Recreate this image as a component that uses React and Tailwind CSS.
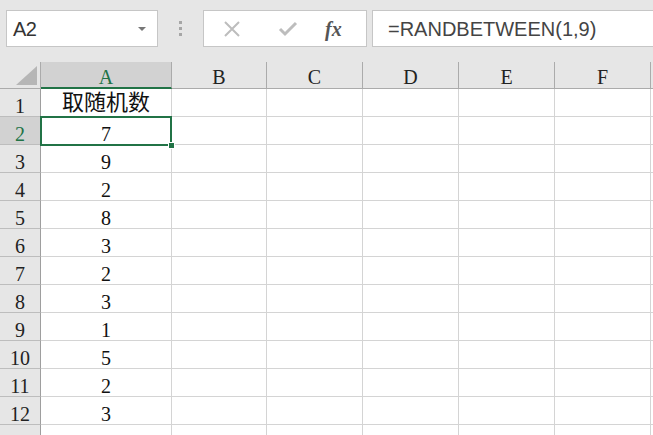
import React from "react";

const cols = [
  { l: "A", w: 131 },
  { l: "B", w: 95 },
  { l: "C", w: 96 },
  { l: "D", w: 96 },
  { l: "E", w: 96 },
  { l: "F", w: 96 },
  { l: "", w: 96 },
];
const data = ["取随机数", "7", "9", "2", "8", "3", "2", "3", "1", "5", "2", "3", ""];

const serif = { fontFamily: '"Liberation Serif", "Noto Sans CJK SC", serif' };

export default function App() {
  return (
    <div className="w-[653px] h-[435px] overflow-hidden bg-[#e6e6e6] relative">
      {/* formula bar */}
      <div className="h-[62px] flex items-start pt-[10px] pl-[6px]">
        <div className="w-[152px] h-[37px] bg-white border border-[#c6c6c6] flex items-center justify-between pl-[6px] pr-[10px]">
          <span className="text-[20px] text-[#333] font-['Liberation_Sans',sans-serif] tracking-[-0.5px]">A2</span>
          <svg width="10" height="6" viewBox="0 0 10 6"><path d="M1 1h8L5 5z" fill="#777" /></svg>
        </div>
        <div className="w-[45px] h-[37px] flex flex-col items-center justify-center gap-[3px]">
          <div className="w-[3px] h-[3px] bg-[#a6a6a6]" />
          <div className="w-[3px] h-[3px] bg-[#a6a6a6]" />
          <div className="w-[3px] h-[3px] bg-[#a6a6a6]" />
        </div>
        <div className="w-[164px] h-[37px] bg-white border border-[#c6c6c6] flex items-center">
          <svg className="ml-[19px]" width="18" height="18" viewBox="0 0 18 18"><path d="M2 2L16 16M16 2L2 16" stroke="#bdbdbd" strokeWidth="2" /></svg>
          <svg className="ml-[37px]" width="20" height="18" viewBox="0 0 20 18"><path d="M2 9L7 14L18 3" stroke="#bdbdbd" strokeWidth="3" fill="none" /></svg>
          <span className="ml-[27px] text-[20px] italic text-[#555] font-['Liberation_Serif',serif] font-semibold">fx</span>
        </div>
        <div className="flex-1 h-[37px] ml-[5px] bg-white border border-r-0 border-[#c6c6c6] flex items-center pl-[15px]">
          <span className="text-[20px] text-[#444] font-['Liberation_Sans',sans-serif]">=RANDBETWEEN(1,9)</span>
        </div>
      </div>

      {/* column header */}
      <div className="flex h-[27px]">
        <div className="w-[41px] shrink-0 h-full border-r border-[#ababab] border-b border-b-[#ababab] relative flex items-end justify-end pr-[3px] pb-[3px]">
          <svg width="21" height="19" viewBox="0 0 21 19"><path d="M21 0V19H0z" fill="#b6b6b6" /></svg>
        </div>
        {cols.map((c, i) => (
          <div
            key={i}
            style={{ width: c.w, ...serif }}
            className={
              i === 0
                ? "shrink-0 h-full bg-[#d2d2d2] border-r border-[#ababab] border-b-2 border-b-[#217346] flex items-center justify-center pt-[4px] text-[20px] text-[#217346]"
                : "shrink-0 h-full border-r border-[#ababab] border-b border-b-[#ababab] flex items-center justify-center pt-[4px] text-[20px] text-[#222]"
            }
          >
            {c.l}
          </div>
        ))}
      </div>

      {/* rows */}
      {data.map((v, r) => (
        <div key={r} className="flex h-[28px]">
          <div
            style={serif}
            className={
              r === 1
                ? "w-[41px] shrink-0 h-full bg-[#d2d2d2] border-r border-[#9e9e9e] border-b border-b-[#bdbdbd] flex items-center justify-center pt-[6px] text-[20px] text-[#217346]"
                : "w-[41px] shrink-0 h-full border-r border-[#9e9e9e] border-b border-b-[#bdbdbd] flex items-center justify-center pt-[6px] text-[20px] text-[#222]"
            }
          >
            {r + 1}
          </div>
          {cols.map((c, i) => (
            <div
              key={i}
              style={{ width: c.w, ...serif }}
              className={
                r === 0 && i === 0
                  ? "shrink-0 h-full bg-white border-r border-b border-[#d4d4d4] flex items-center justify-center text-[22px] text-[#111]"
                  : "shrink-0 h-full bg-white border-r border-b border-[#d4d4d4] flex items-center justify-center pt-[6px] text-[20px] text-[#111]"
              }
            >
              {i === 0 ? v : ""}
            </div>
          ))}
        </div>
      ))}

      {/* selection */}
      <div className="absolute left-[40px] top-[116px] w-[132px] h-[30px] border-2 border-[#217346] pointer-events-none" />
      <div className="absolute left-[168px] top-[142px] w-[7px] h-[7px] bg-[#217346] border border-white" />
    </div>
  );
}
